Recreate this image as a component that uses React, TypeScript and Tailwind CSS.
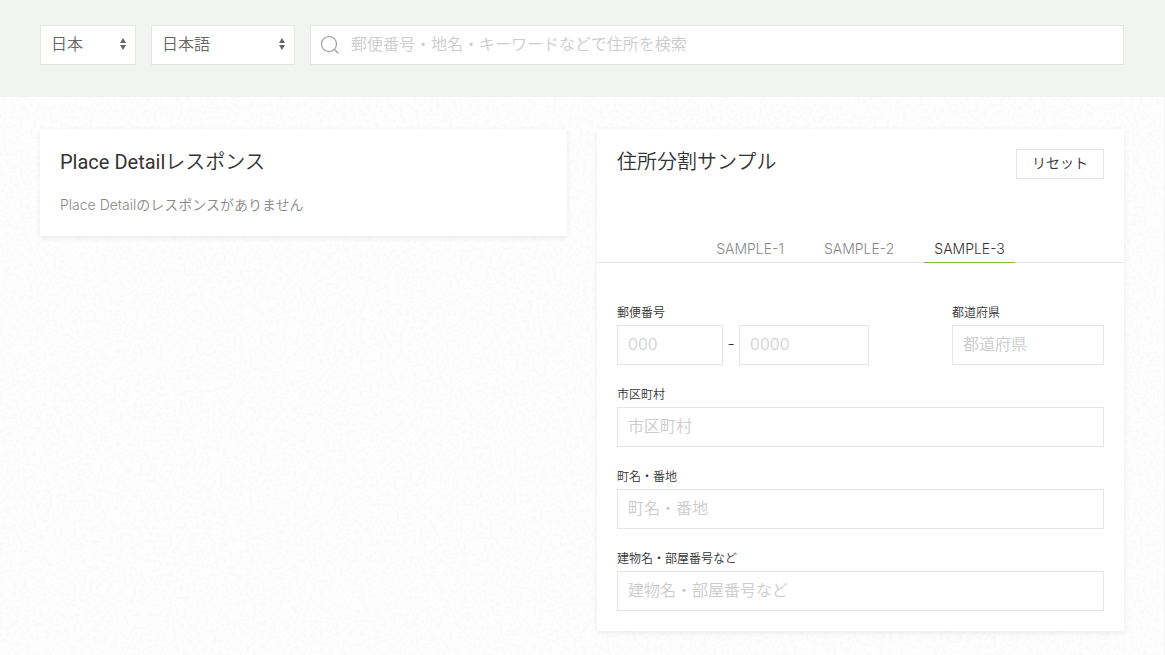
import { useState, type ReactNode } from "react";

const control =
  "h-10 w-full border border-[#e5e5e5] bg-white px-2.5 pb-0.5 text-base text-[#666] outline-none placeholder:text-[#ccc] focus:border-[#7eb93f]";

function CountrySelect({ label, width, options }: { label: string; width: string; options: string[] }) {
  return (
    <div className={`relative shrink-0 ${width}`}>
      <select
        aria-label={label}
        className="h-10 w-full appearance-none border border-[#e5e5e5] bg-white pr-5 pb-0.5 pl-2.5 text-base text-[#666] outline-none"
      >
        {options.map((o) => (
          <option key={o}>{o}</option>
        ))}
      </select>
      <svg
        className="pointer-events-none absolute top-3 right-px"
        width="24"
        height="16"
        viewBox="0 0 24 16"
        fill="#666"
        aria-hidden="true"
      >
        <polygon points="12 1 9 6 15 6" />
        <polygon points="12 13 9 8 15 8" />
      </svg>
    </div>
  );
}

function Field({ id, label, children }: { id: string; label: string; children: ReactNode }) {
  return (
    <div>
      <label htmlFor={id} className="mb-[3px] block text-xs leading-[19px] text-[#333]">
        {label}
      </label>
      {children}
    </div>
  );
}

function PaperTexture() {
  return (
    <svg className="absolute inset-0 -z-10 h-full w-full" aria-hidden="true">
      <defs>
        <filter id="grain" x="0" y="0" width="100%" height="100%">
          <feTurbulence type="fractalNoise" baseFrequency="0.3" numOctaves="2" seed="4" />
          <feColorMatrix values="0 0 0 0 0.91  0 0 0 0 0.91  0 0 0 0 0.91  12 0 0 0 -6.2" />
        </filter>
      </defs>
      <rect width="100%" height="100%" fill="#fefefe" />
      <rect width="100%" height="100%" filter="url(#grain)" opacity="0.28" />
    </svg>
  );
}

const tabs = ["SAMPLE-1", "SAMPLE-2", "SAMPLE-3"];
const card = "bg-white shadow-[0_2px_6px_rgba(0,0,0,0.08)]";
const heading = "font-['Roboto','Noto_Sans_CJK_JP',sans-serif] text-xl leading-[26px]";
const empty = { zip1: "", zip2: "", pref: "", city: "", town: "", building: "" };

export default function App() {
  const [active, setActive] = useState("SAMPLE-3");
  const [values, setValues] = useState(empty);
  const bind = (key: keyof typeof empty) => ({
    id: key,
    type: "text",
    value: values[key],
    onChange: (e: { target: { value: string } }) => setValues({ ...values, [key]: e.target.value }),
  });

  return (
    <div className="relative isolate flex min-h-screen flex-col font-['Inter','Noto_Sans_CJK_JP',sans-serif] font-[350] text-[#333]">
      <PaperTexture />
      <header className="flex gap-[15px] bg-[#f2f4f2] pt-[25px] pr-[41px] pb-8 pl-10">
        <CountrySelect label="国" width="w-24" options={["日本"]} />
        <CountrySelect label="言語" width="w-36" options={["日本語", "English"]} />
        <div className="relative grow">
          <svg
            className="pointer-events-none absolute top-2.5 left-2.5"
            width="20"
            height="20"
            viewBox="0 0 20 20"
            fill="none"
            stroke="#999"
            strokeWidth="1.1"
            aria-hidden="true"
          >
            <circle cx="9" cy="9" r="7.5" />
            <path d="M14.3,14.3 L18.5,18.5" />
          </svg>
          <input
            type="search"
            aria-label="住所を検索"
            placeholder="郵便番号・地名・キーワードなどで住所を検索"
            className="h-10 w-full border border-[#e5e5e5] bg-white pr-2.5 pb-0.5 pl-10 text-base text-[#666] outline-none placeholder:text-[#ccc]"
          />
        </div>
      </header>

      <main className="grid grow grid-cols-2 items-start gap-[30px] border-r border-[#f3f3f3] px-10 pt-8 pb-6">
        <section className={`${card} px-5 pt-5 pb-[21px]`}>
          <h2 className={heading}>
            <span className="font-normal">Place Detail</span>レスポンス
          </h2>
          <p className="mt-[19px] text-sm leading-[21px] text-[#888]">Place Detailのレスポンスがありません</p>
        </section>

        <section className={card}>
          <div className="flex items-start justify-between px-5 pt-5">
            <h2 className={heading}>住所分割サンプル</h2>
            <button
              type="button"
              onClick={() => setValues(empty)}
              className="h-[30px] border border-[#e5e5e5] px-[15px] pb-0.5 text-sm leading-[26px]"
            >
              リセット
            </button>
          </div>

          <div role="tablist" className="mt-[59px] flex justify-center gap-5 border-b border-[#e5e5e5]">
            {tabs.map((t) => (
              <button
                key={t}
                type="button"
                role="tab"
                aria-selected={t === active}
                onClick={() => setActive(t)}
                className={
                  t === active
                    ? "-mb-px border-b border-[#7eb93f] px-2.5 pb-[3px] text-sm leading-[21px] text-[#333]"
                    : "-mb-px border-b border-transparent px-2.5 pb-[3px] text-sm leading-[21px] text-[#888]"
                }
              >
                {t}
              </button>
            ))}
          </div>

          <form className="flex flex-col gap-5 px-5 pt-10 pb-5" onSubmit={(e) => e.preventDefault()}>
            <div className="flex justify-between">
              <Field id="zip1" label="郵便番号">
                <div className="flex items-center">
                  <div className="w-[106px]">
                    <input {...bind("zip1")} placeholder="000" className={control} />
                  </div>
                  <span className="w-4 pb-1 text-center">-</span>
                  <div className="w-[130px]">
                    <input {...bind("zip2")} aria-label="郵便番号 下4桁" placeholder="0000" className={control} />
                  </div>
                </div>
              </Field>
              <div className="w-[152px]">
                <Field id="pref" label="都道府県">
                  <input {...bind("pref")} placeholder="都道府県" className={control} />
                </Field>
              </div>
            </div>
            <Field id="city" label="市区町村">
              <input {...bind("city")} placeholder="市区町村" className={control} />
            </Field>
            <Field id="town" label="町名・番地">
              <input {...bind("town")} placeholder="町名・番地" className={control} />
            </Field>
            <Field id="building" label="建物名・部屋番号など">
              <input {...bind("building")} placeholder="建物名・部屋番号など" className={control} />
            </Field>
          </form>
        </section>
      </main>
    </div>
  );
}
